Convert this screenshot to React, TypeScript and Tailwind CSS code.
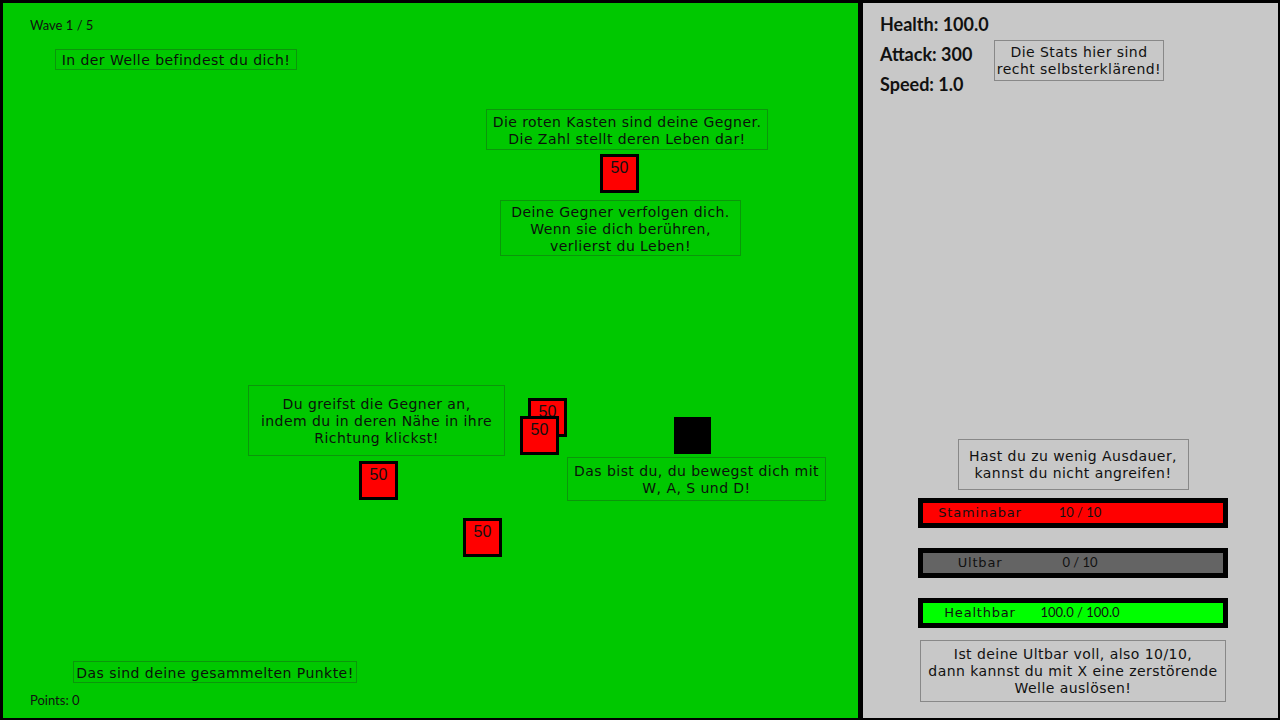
const BOX_FONT = { fontFamily: '"DejaVu Sans", sans-serif' }
const HUD_FONT = { fontFamily: 'Lato, "Liberation Sans", sans-serif' }

type Hint = { left: number; top: number; w: number; h: number; lines: string[] }

const HINTS: Hint[] = [
  { left: 52, top: 46, w: 242, h: 21, lines: ['In der Welle befindest du dich!'] },
  { left: 483, top: 106, w: 282, h: 41, lines: ['Die roten Kasten sind deine Gegner.', 'Die Zahl stellt deren Leben dar!'] },
  { left: 497, top: 197, w: 241, h: 56, lines: ['Deine Gegner verfolgen dich.', 'Wenn sie dich berühren,', 'verlierst du Leben!'] },
  { left: 245, top: 382, w: 257, h: 71, lines: ['Du greifst die Gegner an,', 'indem du in deren Nähe in ihre', 'Richtung klickst!'] },
  { left: 564, top: 454, w: 259, h: 44, lines: ['Das bist du, du bewegst dich mit', 'W, A, S und D!'] },
  { left: 70, top: 658, w: 284, h: 22, lines: ['Das sind deine gesammelten Punkte!'] },
]

const ENEMIES = [
  { left: 597, top: 151 },
  { left: 525, top: 395 },
  { left: 517, top: 413 },
  { left: 356, top: 458 },
  { left: 460, top: 515 },
]

function HintBox({ hint }: { hint: Hint }) {
  return (
    <div
      className="absolute flex flex-col items-center justify-center border border-[#0b960b] pt-[2px] text-center text-[14px] leading-[17px] tracking-[0.45px] text-[#0b110b]"
      style={{ ...BOX_FONT, left: hint.left, top: hint.top, width: hint.w, height: hint.h }}
    >
      {hint.lines.map((l) => (
        <span key={l} className="whitespace-nowrap">{l}</span>
      ))}
    </div>
  )
}

function Bar({ label, value, fill }: { label: string; value: string; fill: string }) {
  return (
    <div className="h-[30px] w-[310px] border-[5px] border-black">
      <div className={`flex h-full items-center ${fill}`}>
        <span
          className="w-[114px] text-center text-[13px] tracking-[0.8px] text-[#111]"
          style={BOX_FONT}
        >
          {label}
        </span>
        <span className="w-[86px] text-center text-[13px] text-[#111]" style={HUD_FONT}>
          {value}
        </span>
      </div>
    </div>
  )
}

export default function App() {
  return (
    <div className="flex h-[720px] w-[1280px] gap-[5px] bg-black pb-[2px] pl-[3px] pr-[2px] pt-[3px]">
      <div className="relative w-[855px] bg-[#00c800]">
        <div className="absolute left-[27px] top-[13px] text-[13px] text-[#111]" style={HUD_FONT}>
          Wave 1 / 5
        </div>
        <div className="absolute bottom-[8px] left-[27px] text-[13px] text-[#111]" style={HUD_FONT}>
          Points: 0
        </div>

        {HINTS.map((h) => (
          <HintBox key={h.lines[0]} hint={h} />
        ))}

        {ENEMIES.map((e, i) => (
          <div
            key={i}
            className="absolute flex h-[39px] w-[39px] justify-center border-[3px] border-black bg-[#ff0000] pt-[1px] text-[16px] leading-[20px] text-[#111]"
            style={{ left: e.left, top: e.top, fontFamily: '"Liberation Sans", sans-serif' }}
          >
            50
          </div>
        ))}

        <div className="absolute left-[671px] top-[414px] h-[37px] w-[37px] bg-black" />
      </div>

      <div className="flex flex-1 flex-col bg-[#c8c8c8] pb-[16px]">
        <div className="flex pl-[17px] pt-[6px]">
          <div className="flex w-[105px] flex-col text-[18px] font-bold leading-[30px] text-[#111]" style={HUD_FONT}>
            <span className="whitespace-nowrap">Health: 100.0</span>
            <span className="whitespace-nowrap">Attack: 300</span>
            <span className="whitespace-nowrap">Speed: 1.0</span>
          </div>
          <div
            className="ml-[9px] mt-[31px] flex h-[41px] w-[170px] flex-col items-center justify-center border border-[#888] pt-[1px] text-[14px] leading-[17px] tracking-[0.45px] text-[#111]"
            style={BOX_FONT}
          >
            <span className="whitespace-nowrap">Die Stats hier sind</span>
            <span className="whitespace-nowrap">recht selbsterklärend!</span>
          </div>
        </div>

        <div className="mt-auto flex flex-col items-center pl-[5px]">
          <div
            className="flex h-[51px] w-[231px] flex-col items-center justify-center border border-[#888] pt-[1px] text-[14px] leading-[17px] tracking-[0.45px] text-[#111]"
            style={BOX_FONT}
          >
            <span className="whitespace-nowrap">Hast du zu wenig Ausdauer,</span>
            <span className="whitespace-nowrap">kannst du nicht angreifen!</span>
          </div>
          <div className="mt-[8px]">
            <Bar label="Staminabar" value="10 / 10" fill="bg-[#ff0000]" />
          </div>
          <div className="mt-[20px]">
            <Bar label="Ultbar" value="0 / 10" fill="bg-[#646464]" />
          </div>
          <div className="mt-[20px]">
            <Bar label="Healthbar" value="100.0 / 100.0" fill="bg-[#00ff00]" />
          </div>
          <div
            className="mt-[12px] flex h-[62px] w-[306px] flex-col items-center justify-center border border-[#888] pt-[1px] text-[14px] leading-[17px] tracking-[0.45px] text-[#111]"
            style={BOX_FONT}
          >
            <span className="whitespace-nowrap">Ist deine Ultbar voll, also 10/10,</span>
            <span className="whitespace-nowrap">dann kannst du mit X eine zerstörende</span>
            <span className="whitespace-nowrap">Welle auslösen!</span>
          </div>
        </div>
      </div>
    </div>
  )
}
